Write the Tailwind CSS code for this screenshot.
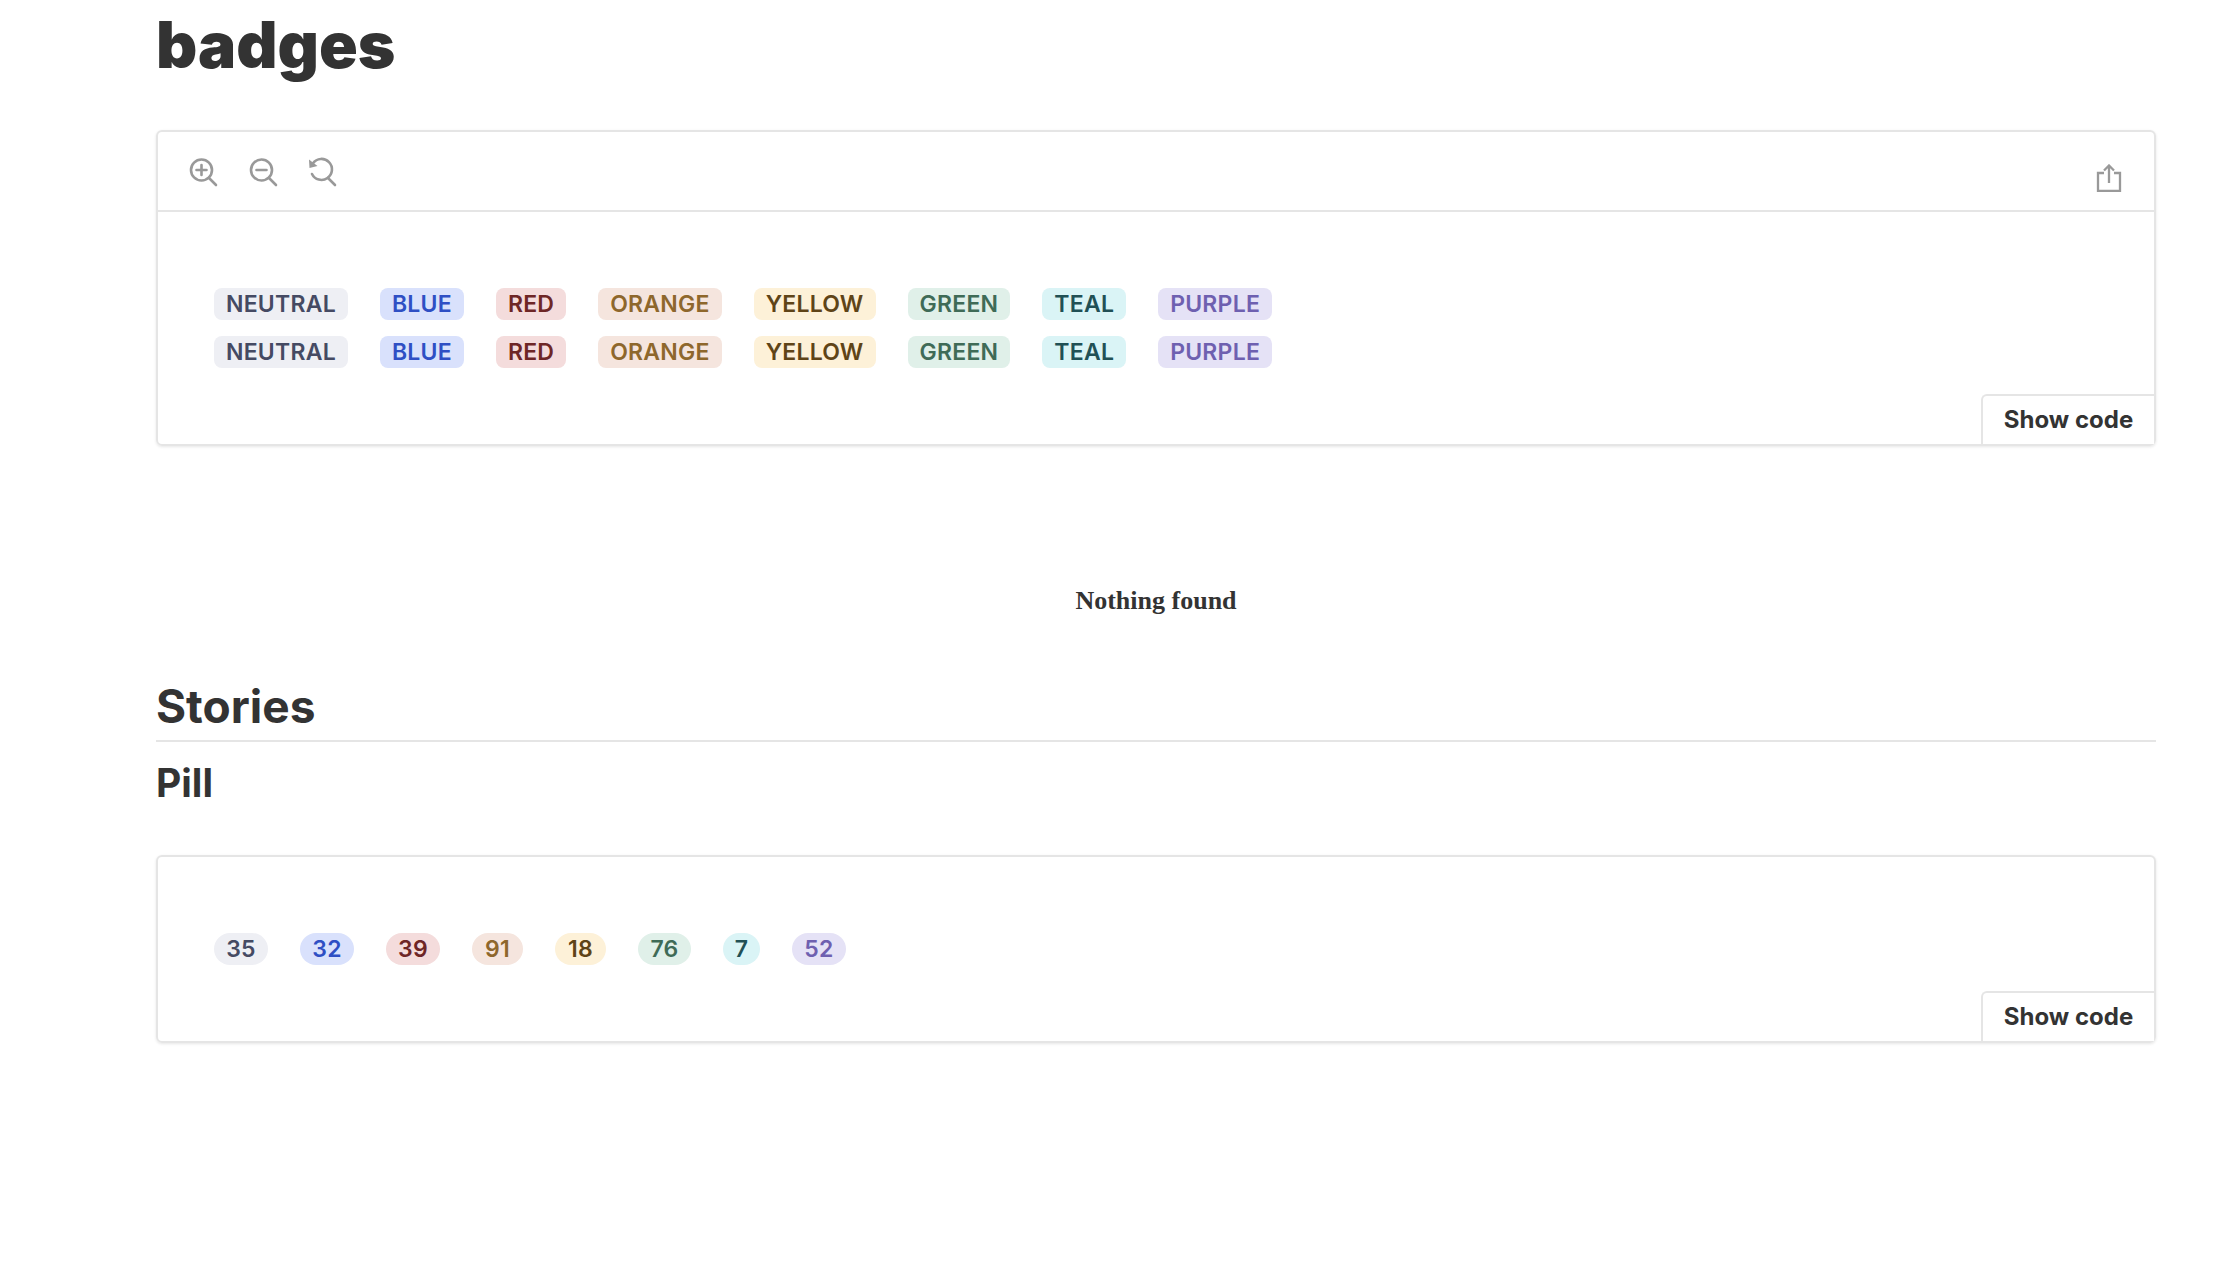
<!doctype html>
<html><head><meta charset="utf-8"><script src="https://cdn.jsdelivr.net/npm/@tailwindcss/browser@4"></script></head>
<body class="bg-white text-[#333] font-['Inter',sans-serif]">
<main class="h-[1275px] overflow-hidden pl-[156px] pr-[62px]">
<h1 class="h-[130px] pt-[9px] text-[64px] leading-[72px] font-black">badges</h1>
<section class="relative h-[316px] rounded-[6px] border-2 border-[#e5e5e5] shadow-[0_1px_3px_rgba(0,0,0,0.1)]">
  <div class="flex h-[80px] items-start justify-between border-b-2 border-[#e5e5e5] pl-[30px] pr-[28px] pt-[25px] text-[#999]">
    <div class="flex gap-[30px]">
      <svg class="size-[30px]" viewBox="0 0 30 30" fill="none" stroke="currentColor" stroke-width="2.600" stroke-linecap="round"><circle cx="13.500" cy="13" r="10.500"/><path d="M21 21l7 7M13.500 8v10M8.500 13h10"/></svg>
      <svg class="size-[30px]" viewBox="0 0 30 30" fill="none" stroke="currentColor" stroke-width="2.600" stroke-linecap="round"><circle cx="13.500" cy="13" r="10.500"/><path d="M21 21l7 7M8.500 13h10"/></svg>
      <svg class="ml-[-1px] size-[30px]" viewBox="0 0 30 30" fill="none" stroke="currentColor" stroke-width="2.600" stroke-linecap="round"><path d="M6 6.200A10.500 10.500 0 1 1 5 17"/><path d="M21 21l7 7"/><path d="M2 2.500l.5 8.500 8-2z" fill="currentColor" stroke="none"/></svg>
    </div>
    <svg class="mr-[4px] mt-[7px] h-[28px] w-[26px]" viewBox="0 0 26 28" fill="none" stroke="currentColor" stroke-width="2.300"><path d="M8 9H2v18h22V9h-6M13 19V2M8 6.500L13 1.500l5 5"/></svg>
  </div>
  <div class="flex flex-col gap-[16px] pl-[56px] pt-[76px]">
    <div class="flex gap-[32px] text-[23px] leading-[32px] font-semibold tracking-[0.24px]">
      <span class="rounded-[8px] bg-[#eeeff4] px-[12px] text-[#454a63]">NEUTRAL</span><span class="rounded-[8px] bg-[#d9e1fc] px-[12px] text-[#2f4fc4]">BLUE</span><span class="rounded-[8px] bg-[#f4dcdc] px-[12px] text-[#6e2626]">RED</span><span class="rounded-[8px] bg-[#f5e5de] px-[12px] text-[#8e672c]">ORANGE</span><span class="rounded-[8px] bg-[#fdf1d8] px-[12px] text-[#5f4417]">YELLOW</span><span class="rounded-[8px] bg-[#e0f0e9] px-[12px] text-[#3f6b57]">GREEN</span><span class="rounded-[8px] bg-[#daf4f6] px-[12px] text-[#215055]">TEAL</span><span class="rounded-[8px] bg-[#e5e2f6] px-[12px] text-[#6e60b0]">PURPLE</span>
    </div>
    <div class="flex gap-[32px] text-[23px] leading-[32px] font-semibold tracking-[0.24px]">
      <span class="rounded-[8px] bg-[#eeeff4] px-[12px] text-[#454a63]">NEUTRAL</span><span class="rounded-[8px] bg-[#d9e1fc] px-[12px] text-[#2f4fc4]">BLUE</span><span class="rounded-[8px] bg-[#f4dcdc] px-[12px] text-[#6e2626]">RED</span><span class="rounded-[8px] bg-[#f5e5de] px-[12px] text-[#8e672c]">ORANGE</span><span class="rounded-[8px] bg-[#fdf1d8] px-[12px] text-[#5f4417]">YELLOW</span><span class="rounded-[8px] bg-[#e0f0e9] px-[12px] text-[#3f6b57]">GREEN</span><span class="rounded-[8px] bg-[#daf4f6] px-[12px] text-[#215055]">TEAL</span><span class="rounded-[8px] bg-[#e5e2f6] px-[12px] text-[#6e60b0]">PURPLE</span>
    </div>
  </div>
  <button class="absolute bottom-0 right-0 h-[50px] w-[173px] rounded-tl-[6px] border-l-2 border-t-2 border-[#e5e5e5] bg-white text-[24px] font-bold text-[#333]">Show code</button>
</section>
<p class="mt-[139px] text-center font-['Liberation_Serif',serif] text-[26px] leading-[32px] font-bold">Nothing found</p>
<h2 class="mt-[63px] h-[62px] border-b-2 border-[#e5e5e5] text-[46px] leading-[52px] font-bold">Stories</h2>
<h3 class="mt-[18px] text-[39px] leading-[46px] font-bold">Pill</h3>
<section class="relative mt-[49px] h-[188px] rounded-[6px] border-2 border-[#e5e5e5] shadow-[0_1px_3px_rgba(0,0,0,0.1)]">
  <div class="flex gap-[32px] pl-[56px] pt-[76px] text-center text-[23px] leading-[32px] font-semibold tracking-[0.24px]">
    <span class="min-w-[54px] rounded-full bg-[#eeeff4] text-[#454a63]">35</span><span class="min-w-[54px] rounded-full bg-[#d9e1fc] text-[#2f4fc4]">32</span><span class="min-w-[54px] rounded-full bg-[#f4dcdc] text-[#6e2626]">39</span><span class="min-w-[51px] rounded-full bg-[#f5e5de] text-[#8e672c]">91</span><span class="min-w-[51px] rounded-full bg-[#fdf1d8] text-[#5f4417]">18</span><span class="min-w-[53px] rounded-full bg-[#e0f0e9] text-[#3f6b57]">76</span><span class="min-w-[37px] rounded-full bg-[#daf4f6] text-[#215055]">7</span><span class="min-w-[54px] rounded-full bg-[#e5e2f6] text-[#6e60b0]">52</span>
  </div>
  <button class="absolute bottom-0 right-0 h-[50px] w-[173px] rounded-tl-[6px] border-l-2 border-t-2 border-[#e5e5e5] bg-white text-[24px] font-bold text-[#333]">Show code</button>
</section>
</main>
</body></html>
